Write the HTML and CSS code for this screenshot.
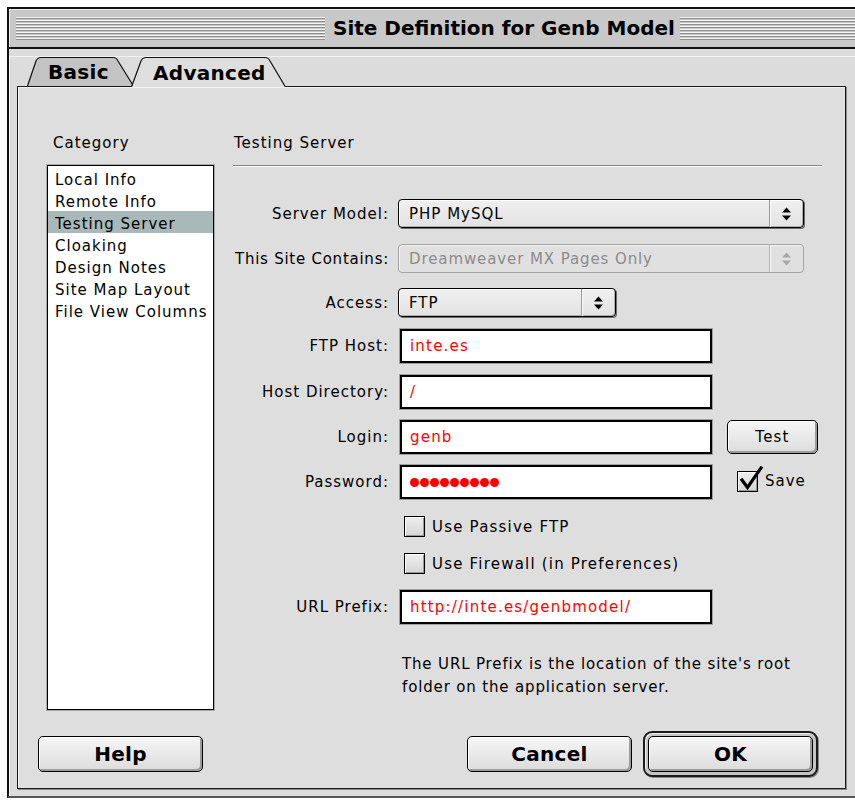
FILE: index.html
```html
<!DOCTYPE html>
<html lang="en">
<head>
<meta charset="utf-8">
<title>Site Definition for Genb Model</title>
<link rel="stylesheet" href="styles.css">
</head>
<body>
<div class="window">
  <div class="titlebar">
    <span class="stripes"></span>
    <h1 class="title">Site Definition for Genb Model</h1>
    <span class="stripes stripes-fill"></span>
  </div>

  <div class="window-body">
    <div class="tabs">
      <div class="tab tab-back">
        <svg class="tab-shape" viewBox="0 0 107 30" preserveAspectRatio="none">
          <path d="M0.5 30 L9 5 Q10.5 1.5 14 1.5 L86 1.5 Q89.5 1.5 91 5 L106.5 30" fill="#c3c3c3" stroke="#111" stroke-width="1.2"/>
        </svg>
        <span class="tab-label">Basic</span>
      </div>
      <div class="tab tab-front">
        <svg class="tab-shape" viewBox="0 0 155 31" preserveAspectRatio="none">
          <path d="M0.5 31 L10 5 Q11.5 1.5 15 1.5 L134 1.5 Q137.5 1.5 139 5 L154.5 31" fill="#dedede" stroke="#111" stroke-width="1.2"/>
        </svg>
        <span class="tab-label">Advanced</span>
      </div>
    </div>

    <div class="panel">
      <div class="panel-main">
        <aside class="sidebar">
          <div class="side-label">Category</div>
          <ul class="category-list">
            <li>Local Info</li>
            <li>Remote Info</li>
            <li class="selected">Testing Server</li>
            <li>Cloaking</li>
            <li>Design Notes</li>
            <li>Site Map Layout</li>
            <li>File View Columns</li>
          </ul>
        </aside>

        <section class="content">
          <div class="section-title">Testing Server</div>
          <div class="rule"></div>

          <div class="row row-popup r1">
            <label class="label">Server Model:</label>
            <div class="popup popup-wide">
              <span class="popup-text">PHP MySQL</span>
              <span class="popup-arrows"><svg width="9" height="14" viewBox="0 0 9 14"><polygon points="0,5.5 4.5,0.5 9,5.5" fill="#000"/><polygon points="0,8.5 4.5,13.5 9,8.5" fill="#000"/></svg></span>
            </div>
          </div>

          <div class="row row-popup r2">
            <label class="label label-long">This Site Contains:</label>
            <div class="popup popup-wide popup-disabled">
              <span class="popup-text">Dreamweaver MX Pages Only</span>
              <span class="popup-arrows"><svg width="9" height="14" viewBox="0 0 9 14"><polygon points="0,5.5 4.5,0.5 9,5.5" fill="#a8a8a8"/><polygon points="0,8.5 4.5,13.5 9,8.5" fill="#a8a8a8"/></svg></span>
            </div>
          </div>

          <div class="row row-popup r3">
            <label class="label">Access:</label>
            <div class="popup popup-short">
              <span class="popup-text">FTP</span>
              <span class="popup-arrows"><svg width="9" height="14" viewBox="0 0 9 14"><polygon points="0,5.5 4.5,0.5 9,5.5" fill="#000"/><polygon points="0,8.5 4.5,13.5 9,8.5" fill="#000"/></svg></span>
            </div>
          </div>

          <div class="row row-field r4">
            <label class="label">FTP Host:</label>
            <div class="field">inte.es</div>
          </div>

          <div class="row row-field r5">
            <label class="label">Host Directory:</label>
            <div class="field">/</div>
          </div>

          <div class="row row-field r6">
            <label class="label">Login:</label>
            <div class="field">genb</div>
            <button class="btn btn-test" type="button">Test</button>
          </div>

          <div class="row row-field r7">
            <label class="label">Password:</label>
            <div class="field field-password">
              <span class="dot"></span><span class="dot"></span><span class="dot"></span>
              <span class="dot"></span><span class="dot"></span><span class="dot"></span>
              <span class="dot"></span><span class="dot"></span><span class="dot"></span>
            </div>
            <div class="save">
              <span class="checkbox checked">
                <svg class="checkmark" width="26" height="28" viewBox="0 0 26 28"><path d="M4 14 L9.5 21.5 L23 2" fill="none" stroke="#000" stroke-width="3.2" stroke-linejoin="miter" stroke-linecap="square"/></svg>
              </span>
              <span class="check-text">Save</span>
            </div>
          </div>

          <div class="row row-check r8">
            <span class="checkbox"></span>
            <span class="check-text">Use Passive FTP</span>
          </div>

          <div class="row row-check r9">
            <span class="checkbox"></span>
            <span class="check-text">Use Firewall (in Preferences)</span>
          </div>

          <div class="row row-field r10">
            <label class="label">URL Prefix:</label>
            <div class="field">http://inte.es/genbmodel/</div>
          </div>

          <p class="hint">The URL Prefix is the location of the site's root<br>folder on the application server.</p>
        </section>
      </div>

      <div class="footer">
        <button class="btn btn-big" type="button">Help</button>
        <div class="footer-right">
          <button class="btn btn-big" type="button">Cancel</button>
          <div class="default-ring">
            <button class="btn btn-big" type="button">OK</button>
          </div>
        </div>
      </div>
    </div>
  </div>
</div>
</body>
</html>
```

FILE: styles.css
```css
html, body {
  margin: 0;
  background: #ffffff;
}

body {
  font-family: "DejaVu Sans", Verdana, sans-serif;
  font-size: 15px;
  letter-spacing: 1px;
  color: #000;
  overflow: hidden;
}

/* ---------- window frame ---------- */
.window {
  margin: 7px 0 0 7px;
  width: 848px;
  box-sizing: border-box;
  border-left: 2px solid #111;
  border-top: 2px solid #111;
  border-bottom: 2px solid #555;
  background: #dcdcdc;
}

.titlebar {
  height: 38px;
  display: flex;
  align-items: center;
  padding-left: 7px;
  background: #c8c8c8;
  border-bottom: 2px solid #111;
  box-shadow: inset 1px 1px 0 #ececec;
}

.stripes {
  flex: none;
  width: 309px;
  height: 23px;
  background: repeating-linear-gradient(to bottom,
    #f4f4f4 0, #f4f4f4 1px,
    #8e8e8e 1px, #8e8e8e 2px,
    #c8c8c8 2px, #c8c8c8 3px);
}

.stripes-fill {
  flex: 1;
  width: auto;
}

.title {
  margin: 0 5px 0 8px;
  font-size: 20px;
  font-weight: bold;
  letter-spacing: 0;
  line-height: 24px;
  white-space: nowrap;
}

.window-body {
  padding-bottom: 7px;
  box-shadow: inset 1px 1px 0 #f2f2f2;
}

/* ---------- tabs ---------- */
.tabs {
  display: flex;
  align-items: flex-start;
  margin: 7px 0 -1px 18px;
  height: 31px;
  position: relative;
  z-index: 1;
}

.tab {
  position: relative;
  display: flex;
  align-items: center;
}

.tab-shape {
  position: absolute;
  inset: 0;
  width: 100%;
  height: 100%;
}

.tab-label {
  position: relative;
  font-size: 20px;
  font-weight: bold;
  letter-spacing: 0.3px;
  line-height: 24px;
  padding-top: 2px;
}

.tab-back {
  width: 107px;
  height: 30px;
  padding-left: 21px;
  box-sizing: border-box;
}

.tab-front {
  width: 155px;
  height: 31px;
  margin-left: -3px;
  padding-left: 22px;
  box-sizing: border-box;
}

/* ---------- panel ---------- */
.panel {
  margin: 0 9px 0 8px;
  border: 1px solid #1a1a1a;
  background: #dedede;
  padding: 47px 0 11px 0;
  box-shadow: 1px 1px 0 #8a8a8a, inset 1px 1px 0 #f4f4f4;
}

.panel-main {
  display: flex;
  align-items: flex-start;
  padding-left: 29px;
}

.sidebar {
  width: 167px;
  flex: none;
}

.side-label,
.section-title {
  line-height: 18px;
  height: 18px;
  padding-left: 6px;
}

.section-title {
  padding-left: 1px;
}

.category-list {
  list-style: none;
  margin: 13px 0 0 0;
  padding: 1px 0 0 0;
  height: 545px;
  box-sizing: border-box;
  border: 1px solid #000;
  background: #fff;
  box-shadow: 0 0 0 1px #a8a8a8;
}

.category-list li {
  height: 22px;
  box-sizing: border-box;
  padding: 4px 0 0 7px;
  line-height: 18px;
  white-space: nowrap;
}

.category-list li.selected {
  background: #a9b8b8;
}

/* ---------- right column ---------- */
.content {
  margin-left: 19px;
  width: 589px;
}

.rule {
  margin-top: 13px;
  height: 1px;
  background: #858585;
  border-bottom: 1px solid #fbfbfb;
}

.row {
  display: flex;
  align-items: center;
}

.label {
  width: 156px;
  flex: none;
  text-align: right;
  margin-right: 9px;
  line-height: 18px;
  white-space: nowrap;
}

.label-long {
  letter-spacing: 0.75px;
}

.row-popup { height: 29px; }
.row-field { height: 34px; }
.row-check { height: 21px; padding-left: 171px; }

.r1 { margin-top: 32px; }
.r2 { margin-top: 16px; }
.r3 { margin-top: 15px; }
.r4 { margin-top: 12px; }
.r5 { margin-top: 12px; }
.r6 { margin-top: 11px; }
.r7 { margin-top: 11px; }
.r8 { margin-top: 17px; }
.r9 { margin-top: 16px; }
.r10 { margin-top: 16px; }

/* popup menus */
.popup {
  height: 29px;
  box-sizing: border-box;
  display: flex;
  align-items: stretch;
  border: 1px solid #000;
  border-radius: 4px;
  background: linear-gradient(#f0f0f0, #e2e2e2);
  box-shadow: 1px 1px 0 #6c6c6c, inset 1px 1px 0 #ffffff, inset -1px -1px 0 #b0b0b0;
}

.popup-wide { width: 406px; }
.popup-short { width: 218px; }

.popup-text {
  flex: 1;
  padding-left: 10px;
  line-height: 28px;
  white-space: nowrap;
}

.popup-arrows {
  width: 33px;
  flex: none;
  display: flex;
  align-items: center;
  justify-content: center;
  border-left: 1px solid #9a9a9a;
  box-shadow: inset 1px 0 0 #fafafa;
}

.popup-disabled {
  border-color: #a4a4a4;
  color: #8c8c8c;
  background: #e0e0e0;
  box-shadow: inset 1px 1px 0 #f2f2f2;
}

.popup-disabled .popup-text {
  letter-spacing: 0.9px;
}

.popup-disabled .popup-arrows {
  border-left-color: #b4b4b4;
}

/* text fields */
.field {
  margin-left: 2px;
  width: 312px;
  height: 34px;
  box-sizing: border-box;
  border: 2px solid #000;
  background: #fff;
  box-shadow: 0 0 0 1px #a0a0a0;
  color: #ff0000;
  padding-left: 8px;
  line-height: 31px;
  letter-spacing: 1.2px;
  white-space: nowrap;
  flex: none;
}

.field-password {
  display: flex;
  align-items: center;
  gap: 1px;
}

.dot {
  width: 9px;
  height: 9px;
  border-radius: 50%;
  background: #ff0000;
}

/* buttons */
.btn {
  font-family: inherit;
  color: #000;
  border: 1px solid #000;
  border-radius: 5px;
  background: linear-gradient(#f6f6f6, #dcdcdc);
  box-shadow: inset 1px 1px 0 #ffffff, inset -2px -2px 0 #9c9c9c;
  padding: 0;
  cursor: default;
}

.btn-test {
  margin-left: 15px;
  width: 91px;
  height: 34px;
  font-size: 15px;
  letter-spacing: 1.2px;
  margin-top: -1px;
}

.btn-big {
  width: 165px;
  height: 36px;
  font-size: 20px;
  font-weight: bold;
  letter-spacing: 0.3px;
}

/* check boxes */
.checkbox {
  position: relative;
  width: 21px;
  height: 21px;
  box-sizing: border-box;
  flex: none;
  border: 1px solid #000;
  background: linear-gradient(#eeeeee, #d6d6d6);
  box-shadow: inset 1px 1px 0 #ffffff, inset -1px -1px 0 #999999;
}

.checkmark {
  position: absolute;
  left: 0;
  top: -6px;
}

.check-text {
  margin-left: 7px;
  line-height: 18px;
  white-space: nowrap;
  letter-spacing: 1.2px;
}

.save {
  display: flex;
  align-items: center;
  margin-left: 25px;
  margin-top: -2px;
}

.save .check-text {
  letter-spacing: 1px;
}

.hint {
  margin: 29px 0 0 169px;
  line-height: 23px;
  letter-spacing: 0.85px;
}

/* ---------- footer buttons ---------- */
.footer {
  margin-top: 21px;
  height: 46px;
  display: flex;
  align-items: center;
  justify-content: space-between;
  padding: 0 27px 0 20px;
}

.footer-right {
  display: flex;
  align-items: center;
  gap: 11px;
}

.default-ring {
  width: 175px;
  height: 46px;
  box-sizing: border-box;
  border: 2px solid #1a1a1a;
  border-radius: 9px;
  padding: 3px;
  background: #c4c4c4;
  box-shadow: inset 1px 1px 0 #f0f0f0, 1px 1px 0 #888;
}
```
